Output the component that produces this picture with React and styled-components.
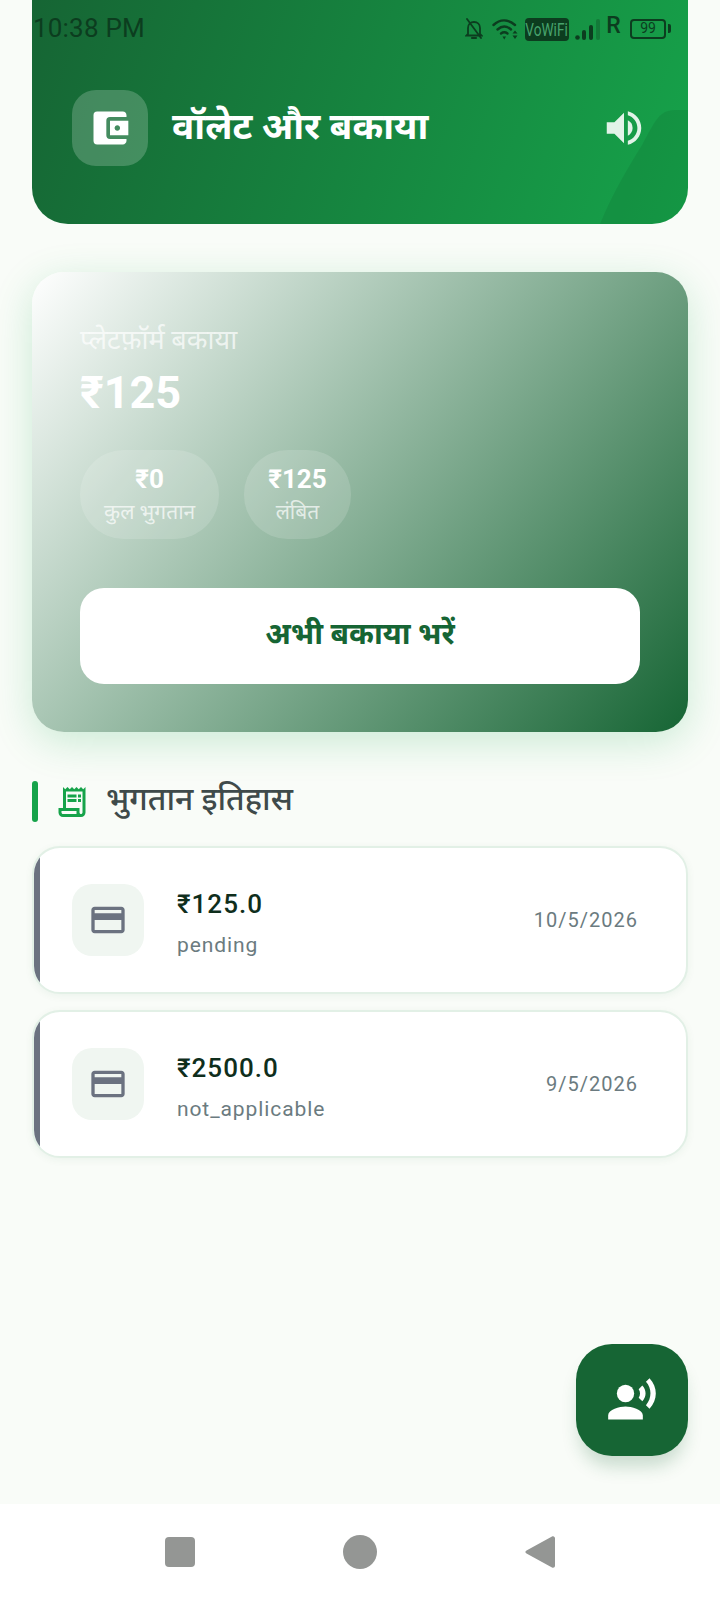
import React from "react";
import styled, { createGlobalStyle } from "styled-components";
import {
  MdAccountBalanceWallet,
  MdVolumeUp,
  MdOutlineReceiptLong,
  MdOutlineCreditCard,
  MdRecordVoiceOver,
} from "react-icons/md";

const FONT = `Roboto, "Noto Sans", "Noto Sans Devanagari", "Lohit Devanagari", sans-serif`;
const STATUS_INK = "#0c3d1f";

const Global = createGlobalStyle`
  html, body { margin: 0; padding: 0; background: #f9fcf8; }
  * { box-sizing: border-box; }
  body { font-family: ${FONT}; }
`;

const Page = styled.div`
  position: relative;
  width: 720px;
  height: 1600px;
  display: flex;
  flex-direction: column;
  background: #f9fcf8;
  overflow: hidden;
`;

const Main = styled.main`
  flex: 1;
  padding: 0 32px;
  display: flex;
  flex-direction: column;
`;

const Header = styled.header`
  position: relative;
  height: 224px;
  border-radius: 0 0 36px 36px;
  background: linear-gradient(109deg, #166534 0%, #16a34a 100%);
  overflow: hidden;
  display: flex;
  flex-direction: column;
`;

const HeaderShape = styled.svg`
  position: absolute;
  right: 0;
  bottom: 0;
  width: 88px;
  height: 114px;
`;

const StatusBar = styled.div`
  height: 56px;
  display: flex;
  align-items: center;
  justify-content: space-between;
  color: ${STATUS_INK};
`;

const Time = styled.span`
  font-size: 26px;
  line-height: 58px;
  padding-left: 1px;
  letter-spacing: 0.2px;
`;

const StatusIcons = styled.div`
  display: flex;
  align-items: center;
  padding: 2px 19px 0 0;
`;

const BellOff = styled.svg`
  width: 18px;
  height: 22px;
  margin-right: 9px;
`;

const WifiIcon = styled.svg`
  width: 27px;
  height: 23px;
  margin-right: 6px;
`;

const VoWifi = styled.span`
  width: 44px;
  height: 23px;
  background: ${STATUS_INK};
  color: #47a36d;
  border-radius: 4px;
  font-size: 19px;
  line-height: 23px;
  display: flex;
  justify-content: center;
  overflow: hidden;
  white-space: nowrap;
  margin-right: 6px;
`;

const VoWifiText = styled.span`
  display: inline-block;
  transform: scaleX(0.72);
`;

const SignalIcon = styled.svg`
  width: 25px;
  height: 21px;
  margin-right: 7px;
`;

const Roaming = styled.span`
  width: 13px;
  font-size: 23px;
  line-height: 20px;
  font-weight: 500;
  margin: -7px 10px 0 0;
  display: flex;
  justify-content: center;
`;

const Battery = styled.span`
  position: relative;
  width: 36px;
  height: 20px;
  border: 2.5px solid ${STATUS_INK};
  border-radius: 4px;
  font-size: 14px;
  line-height: 15px;
  text-align: center;
  margin-right: 3px;

  &::after {
    content: "";
    position: absolute;
    right: -6.500px;
    top: 3px;
    width: 3px;
    height: 9px;
    background: ${STATUS_INK};
    border-radius: 0 2px 2px 0;
  }
`;

const HeaderRow = styled.div`
  position: relative;
  display: flex;
  align-items: center;
  padding: 34px 41px 0 40px;
`;

const HeaderBadge = styled.div`
  width: 76px;
  height: 76px;
  border-radius: 24px;
  background: rgba(255, 255, 255, 0.2);
  display: flex;
  align-items: center;
  justify-content: center;
  color: #fff;
  font-size: 44px;
`;

const HeaderTitle = styled.h1`
  flex: 1;
  margin: -2px 0 0 24px;
  font-size: 37px;
  line-height: 44px;
  font-weight: 700;
  color: #fff;
`;

const SoundIcon = styled(MdVolumeUp)`
  color: rgba(255, 255, 255, 0.88);
  font-size: 46px;
`;

const BalanceCard = styled.section`
  margin-top: 48px;
  height: 460px;
  border-radius: 32px;
  padding: 48px;
  display: flex;
  flex-direction: column;
  background: linear-gradient(130deg, #ffffff 0%, #166534 100%);
  box-shadow: 0 10px 40px rgba(22, 163, 74, 0.2);
`;

const BalanceLabel = styled.div`
  font-size: 27px;
  line-height: 40px;
  color: rgba(255, 255, 255, 0.7);
`;

const BalanceAmount = styled.div`
  margin-top: 6px;
  font-size: 45px;
  line-height: 54px;
  font-weight: 700;
  color: #fff;
`;

const ChipRow = styled.div`
  margin-top: 30px;
  display: flex;
  align-items: center;
  gap: 25px;
`;

const Chip = styled.div`
  padding: 14px 24px 13px;
  border-radius: 44px;
  background: rgba(255, 255, 255, 0.15);
  display: flex;
  flex-direction: column;
  align-items: center;
  gap: 5px;
`;

const ChipValue = styled.span`
  font-size: 26px;
  line-height: 30px;
  font-weight: 700;
  color: #fff;
`;

const ChipLabel = styled.span`
  font-size: 21px;
  line-height: 27px;
  color: rgba(255, 255, 255, 0.7);
`;

const PayButton = styled.button`
  margin-top: auto;
  height: 96px;
  width: 100%;
  border: 0;
  border-radius: 24px;
  padding: 0 0 8px;
  background: #fff;
  color: #166534;
  font: 700 30px ${FONT};
`;

const SectionHead = styled.div`
  margin-top: 49px;
  height: 41px;
  display: flex;
  align-items: center;
`;

const SectionBar = styled.span`
  width: 6px;
  height: 41px;
  border-radius: 3px;
  background: #16a34a;
`;

const SectionIcon = styled(MdOutlineReceiptLong)`
  margin-left: 16px;
  color: #16a34a;
  font-size: 36px;
`;

const SectionTitle = styled.h2`
  margin: -8px 0 0 16px;
  font-size: 32px;
  font-weight: 500;
  color: #3f4a4a;
`;

const List = styled.div`
  margin-top: 24px;
  display: flex;
  flex-direction: column;
  gap: 16px;
`;

const Row = styled.article`
  height: 148px;
  border-radius: 28px;
  border: 2px solid #e2f0e6;
  background: #fff;
  box-shadow: 0 2px 8px rgba(22, 101, 52, 0.06);
  display: flex;
  align-items: center;
  padding: 0 48px 0 38px;
  position: relative;
  overflow: hidden;

  &::before {
    content: "";
    position: absolute;
    left: 0;
    top: 0;
    bottom: 0;
    width: 6px;
    background: #6b7280;
  }
`;

const RowIcon = styled.div`
  width: 72px;
  height: 72px;
  border-radius: 20px;
  background: #f0f6f1;
  display: flex;
  align-items: center;
  justify-content: center;
  color: #6b7280;
  font-size: 40px;
`;

const RowBody = styled.div`
  flex: 1;
  margin-left: 33px;
  padding-top: 6px;
  display: flex;
  flex-direction: column;
  gap: 9px;
`;

const RowAmount = styled.span`
  font-size: 26px;
  line-height: 34px;
  font-weight: 500;
  letter-spacing: 1px;
  color: #0f2e1c;
`;

const RowStatus = styled.span`
  font-size: 21px;
  line-height: 30px;
  letter-spacing: 0.9px;
  color: #6b7b80;
`;

const RowDate = styled.span`
  font-size: 20px;
  letter-spacing: 1px;
  color: #6b7b80;
`;

const Fab = styled.button`
  position: absolute;
  right: 32px;
  bottom: 144px;
  width: 112px;
  height: 112px;
  border: 0;
  border-radius: 36px;
  background: #166534;
  color: #fff;
  display: flex;
  align-items: center;
  justify-content: center;
  font-size: 52px;
  box-shadow: 0 14px 18px -4px rgba(22, 101, 52, 0.22);
`;

const NavBar = styled.nav`
  height: 96px;
  background: #fff;
  display: flex;
  align-items: center;
  justify-content: center;
  gap: 148px;
  color: #949694;
`;

const NavSquare = styled.span`
  width: 30px;
  height: 30px;
  border-radius: 4px;
  background: currentColor;
`;

const NavCircle = styled.span`
  width: 34px;
  height: 34px;
  border-radius: 50%;
  background: currentColor;
`;

const NavBack = styled.svg`
  width: 30px;
  height: 34px;
  display: block;
`;

const BellOffGlyph = () => (
  <BellOff viewBox="0 0 18 22" fill="none" stroke={STATUS_INK} strokeWidth="1.800" strokeLinecap="round" aria-hidden="true">
    <path d="M3 16V10C3 6.500 5.500 4 9 4s6 2.500 6 6v6l1.500 1.500H1.500z" />
    <path d="M7 20h4" strokeWidth="2.200" />
    <path d="M2 1l14 19" />
  </BellOff>
);

const WifiGlyph = () => (
  <WifiIcon viewBox="0 0 27 23" fill="none" stroke={STATUS_INK} strokeWidth="2.400" strokeLinecap="round" aria-hidden="true">
    <path d="M1.500 7C8 1 16 1 23 7" />
    <path d="M5.500 11.500C10 7.500 14.500 7.500 19 11.500" />
    <path d="M9 15.500C11 14 13.500 14 15.500 15.500" />
    <path d="M10.500 18.500h3.500l-1.750 3z" fill={STATUS_INK} stroke="none" />
    <path d="M20.500 15.500l2.500-3 2.500 3zM20.500 17.500h5l-2.500 3.500z" fill={STATUS_INK} stroke="none" />
  </WifiIcon>
);

const SignalGlyph = () => (
  <SignalIcon viewBox="0 0 25 21" aria-hidden="true">
    <circle cx="2.500" cy="18.500" r="2.300" fill={STATUS_INK} />
    <rect x="7" y="11" width="4" height="10" rx="2" fill={STATUS_INK} />
    <rect x="14" y="6" width="4" height="15" rx="2" fill={STATUS_INK} />
    <rect x="21" y="0" width="4" height="21" rx="2" fill={STATUS_INK} opacity="0.3" />
  </SignalIcon>
);

const payments = [
  { amount: "₹125.0", status: "pending", date: "10/5/2026" },
  { amount: "₹2500.0", status: "not_applicable", date: "9/5/2026" },
];

export default function App() {
  return (
    <Page>
      <Global />
      <Main>
        <Header>
          <HeaderShape viewBox="0 0 88 114" aria-hidden="true">
            <path d="M0 114C14 80 28 58 42 35 50 20 56 8 62 4 66 1 70 0 74 0H88V114Z" fill="rgba(0,0,0,0.07)" />
          </HeaderShape>
          <StatusBar>
            <Time>10:38 PM</Time>
            <StatusIcons>
              <BellOffGlyph />
              <WifiGlyph />
              <VoWifi>
                <VoWifiText>VoWiFi</VoWifiText>
              </VoWifi>
              <SignalGlyph />
              <Roaming>R</Roaming>
              <Battery>99</Battery>
            </StatusIcons>
          </StatusBar>
          <HeaderRow>
            <HeaderBadge>
              <MdAccountBalanceWallet />
            </HeaderBadge>
            <HeaderTitle>वॉलेट और बकाया</HeaderTitle>
            <SoundIcon />
          </HeaderRow>
        </Header>

        <BalanceCard>
          <BalanceLabel>प्लेटफ़ॉर्म बकाया</BalanceLabel>
          <BalanceAmount>₹125</BalanceAmount>
          <ChipRow>
            <Chip>
              <ChipValue>₹0</ChipValue>
              <ChipLabel>कुल भुगतान</ChipLabel>
            </Chip>
            <Chip>
              <ChipValue>₹125</ChipValue>
              <ChipLabel>लंबित</ChipLabel>
            </Chip>
          </ChipRow>
          <PayButton>अभी बकाया भरें</PayButton>
        </BalanceCard>

        <SectionHead>
          <SectionBar />
          <SectionIcon />
          <SectionTitle>भुगतान इतिहास</SectionTitle>
        </SectionHead>

        <List>
          {payments.map((p) => (
            <Row key={p.amount}>
              <RowIcon>
                <MdOutlineCreditCard />
              </RowIcon>
              <RowBody>
                <RowAmount>{p.amount}</RowAmount>
                <RowStatus>{p.status}</RowStatus>
              </RowBody>
              <RowDate>{p.date}</RowDate>
            </Row>
          ))}
        </List>
      </Main>

      <Fab aria-label="voice">
        <MdRecordVoiceOver />
      </Fab>

      <NavBar>
        <NavSquare />
        <NavCircle />
        <NavBack viewBox="0 0 30 34" aria-hidden="true">
          <path d="M27 1.500c1.500-.8 3 .2 3 2v27c0 1.800-1.500 2.800-3 2L1.500 18.500c-1.500-.8-1.500-2.200 0-3z" fill="currentColor" />
        </NavBack>
      </NavBar>
    </Page>
  );
}
